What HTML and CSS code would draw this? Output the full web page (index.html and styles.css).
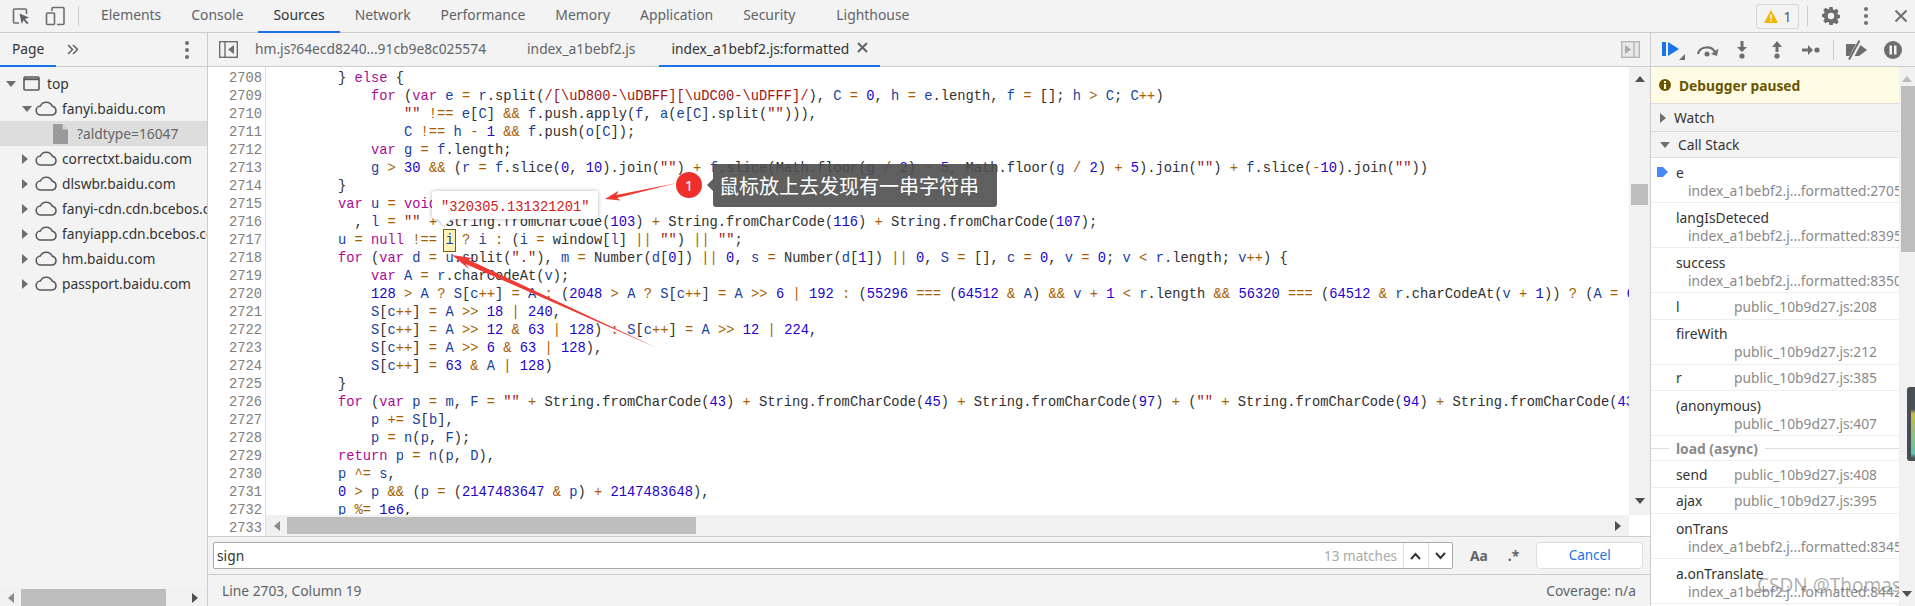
FILE: index.html
```html
<!DOCTYPE html>
<html lang="zh-CN">
<head>
  <meta charset="UTF-8">
  <title>DevTools - Sources</title>
  <link rel="stylesheet" href="styles.css">
</head>
<body>

  <!-- Barra principal -->
  <header class="topbar">
    <div class="top-tools">
      <svg class="tool-inspect" width="18" height="18" viewBox="0 0 18 18"><path d="M7 16H2.500a1 1 0 0 1-1-1V3a1 1 0 0 1 1-1h11a1 1 0 0 1 1 1v4" fill="none" stroke="#6e6e6e" stroke-width="1.600"/><path d="M7.500 6.500 17 10.500l-4 1.500 3.500 4-1.500 1.300-3.400-4-1.900 3.600z" fill="#5f6368"/></svg>
      <svg class="tool-device" width="20" height="20" viewBox="0 0 20 20"><path d="M7 5V2.500a1 1 0 0 1 1-1h10a1 1 0 0 1 1 1v15a1 1 0 0 1-1 1h-6" fill="none" stroke="#6e6e6e" stroke-width="1.600"/><rect x="1.500" y="7" width="8" height="11.500" rx="1" fill="none" stroke="#6e6e6e" stroke-width="1.600"/></svg>
      <span class="top-divider"></span>
    </div>
    <nav class="top-tabs">
      <span class="top-tab">Elements</span>
      <span class="top-tab">Console</span>
      <span class="top-tab top-tab-active">Sources</span>
      <span class="top-tab">Network</span>
      <span class="top-tab">Performance</span>
      <span class="top-tab">Memory</span>
      <span class="top-tab">Application</span>
      <span class="top-tab">Security</span>
      <span class="top-tab top-tab-last">Lighthouse</span>
    </nav>
    <div class="top-right">
      <span class="warn-badge">
        <svg width="14" height="13" viewBox="0 0 14 13"><path d="M7 0 14 13H0z" fill="#f4b400"/><path d="M6.200 4.500h1.600v4.500H6.200zM6.200 10h1.600v1.500H6.200z" fill="#fff"/></svg>
        <span>1</span>
      </span>
      <span class="top-divider"></span>
      <svg class="gear" width="18" height="18" viewBox="0 0 18 18"><path fill="#6e6e6e" fill-rule="evenodd" d="M7.400 0h3.200l.4 2.400 1.500.7 2-1.400 2.200 2.300-1.300 2 .6 1.500 2 .5v3l-2 .5-.6 1.500 1.300 2-2.200 2.200-2-1.300-1.500.6-.4 2.500H7.400L7 15.500l-1.500-.6-2 1.300-2.200-2.200 1.300-2-.6-1.500-2-.5V7l2-.5.6-1.500-1.300-2 2.200-2.300 2 1.400L7 2.400zM9 5.800a3.200 3.200 0 1 0 0 6.400 3.200 3.200 0 0 0 0-6.400z"/></svg>
      <span class="vdots"><i></i><i></i><i></i></span>
      <svg class="close-x" width="14" height="14" viewBox="0 0 14 14"><path d="M1.500 1.500l11 11M12.500 1.500l-11 11" stroke="#6e6e6e" stroke-width="2"/></svg>
    </div>
  </header>

  <main class="workspace">

    <!-- Panel de archivos -->
    <aside class="navigator">
      <div class="nav-head">
        <span class="nav-tab">Page</span>
        <span class="nav-more">
          <svg width="12" height="11" viewBox="0 0 12 11"><path d="M1 1l4.500 4.500L1 10M6 1l4.500 4.500L6 10" fill="none" stroke="#5f6368" stroke-width="1.500"/></svg>
        </span>
        <span class="vdots nav-dots"><i></i><i></i><i></i></span>
      </div>
      <div class="tree">
        <div class="tree-row">
          <span class="tri tri-down tree-tri-top"></span>
          <svg class="frame-icon" width="17" height="15" viewBox="0 0 17 15"><rect x="1" y="1" width="15" height="13" rx="1" fill="none" stroke="#5a5a5a" stroke-width="1.600"/><path d="M1 3.200h15" stroke="#5a5a5a" stroke-width="2"/></svg>
          <span class="tree-label">top</span>
        </div>
        <div class="tree-row tree-domain">
          <span class="tri tri-down"></span>
          <svg class="cloud" width="23" height="15" viewBox="0 0 23 15"><use href="#cloud-shape"/></svg>
          <span class="tree-label">fanyi.baidu.com</span>
        </div>
        <div class="tree-row tree-file">
          <svg class="file-icon" width="15" height="20" viewBox="0 0 15 20"><path d="M0 0h9.500L15 5.500V20H0z" fill="#9a9a9a"/><path d="M9.500 0v5.500H15z" fill="#d4d4d4"/></svg>
          <span class="tree-label">?aldtype=16047</span>
        </div>
        <div class="tree-row tree-domain">
          <span class="tri tri-right"></span>
          <svg class="cloud" width="23" height="15" viewBox="0 0 23 15"><use href="#cloud-shape"/></svg>
          <span class="tree-label">correctxt.baidu.com</span>
        </div>
        <div class="tree-row tree-domain">
          <span class="tri tri-right"></span>
          <svg class="cloud" width="23" height="15" viewBox="0 0 23 15"><use href="#cloud-shape"/></svg>
          <span class="tree-label">dlswbr.baidu.com</span>
        </div>
        <div class="tree-row tree-domain">
          <span class="tri tri-right"></span>
          <svg class="cloud" width="23" height="15" viewBox="0 0 23 15"><use href="#cloud-shape"/></svg>
          <span class="tree-label">fanyi-cdn.cdn.bcebos.com</span>
        </div>
        <div class="tree-row tree-domain">
          <span class="tri tri-right"></span>
          <svg class="cloud" width="23" height="15" viewBox="0 0 23 15"><use href="#cloud-shape"/></svg>
          <span class="tree-label">fanyiapp.cdn.bcebos.com</span>
        </div>
        <div class="tree-row tree-domain">
          <span class="tri tri-right"></span>
          <svg class="cloud" width="23" height="15" viewBox="0 0 23 15"><use href="#cloud-shape"/></svg>
          <span class="tree-label">hm.baidu.com</span>
        </div>
        <div class="tree-row tree-domain">
          <span class="tri tri-right"></span>
          <svg class="cloud" width="23" height="15" viewBox="0 0 23 15"><use href="#cloud-shape"/></svg>
          <span class="tree-label">passport.baidu.com</span>
        </div>
      </div>
      <div class="hbar nav-hbar">
        <span class="tri tri-left"></span>
        <span class="hbar-thumb nav-thumb"></span>
        <span class="tri tri-right tri-dark nav-next"></span>
      </div>
    </aside>

    <!-- Editor -->
    <section class="center">
      <div class="source-tabs">
        <svg class="pane-toggle" width="19" height="17" viewBox="0 0 19 17"><rect x="0.700" y="0.700" width="17.600" height="15.600" fill="none" stroke="#6e6e6e" stroke-width="1.400"/><path d="M6 1v15" stroke="#6e6e6e" stroke-width="1.400"/><path d="M15 4v9l-6-4.500z" fill="#6e6e6e"/></svg>
        <span class="source-tab source-tab-first">hm.js?64ecd8240...91cb9e8c025574</span>
        <span class="source-tab">index_a1bebf2.js</span>
        <span class="source-tab source-tab-active">index_a1bebf2.js:formatted
          <svg width="11" height="11" viewBox="0 0 11 11"><path d="M1 1l9 9M10 1l-9 9" stroke="#5f6368" stroke-width="2"/></svg>
        </span>
        <svg class="pane-toggle-right" width="19" height="17" viewBox="0 0 19 17"><rect x="0.700" y="0.700" width="17.600" height="15.600" fill="#e8e8e8" stroke="#b5b5b5" stroke-width="1.400"/><path d="M13 1v15" stroke="#b5b5b5" stroke-width="1.400"/><path d="M4 4v9l6-4.500z" fill="#a8a8a8"/></svg>
      </div>

      <div class="editor">
        <div class="gutter" id="gutter"></div>
        <div class="code-view"><div class="code-lines" id="code"></div></div>
        <div class="vbar">
          <span class="tri tri-up tri-dark"></span>
          <span class="vbar-thumb"></span>
          <span class="tri tri-down tri-dark vbar-next"></span>
        </div>
        <div class="hbar code-hbar">
          <span class="tri tri-left"></span>
          <span class="hbar-thumb code-thumb"></span>
          <span class="tri tri-right tri-dark code-next"></span>
        </div>
        <div class="corner"></div>
      </div>

      <div class="search-bar">
        <div class="search-box">
          <span class="search-text">sign</span>
          <span class="search-count">13 matches</span>
          <span class="search-step">
            <svg width="11" height="8" viewBox="0 0 11 8"><path d="M1 7l4.500-5L10 7" fill="none" stroke="#333" stroke-width="2"/></svg>
          </span>
          <span class="search-step">
            <svg width="11" height="8" viewBox="0 0 11 8"><path d="M1 1l4.500 5L10 1" fill="none" stroke="#333" stroke-width="2"/></svg>
          </span>
        </div>
        <span class="search-case">Aa</span>
        <span class="search-regex">.*</span>
        <span class="search-cancel">Cancel</span>
      </div>

      <footer class="status-bar">
        <span>Line 2703, Column 19</span>
        <span>Coverage: n/a</span>
      </footer>
    </section>

    <!-- Depurador -->
    <aside class="debugger">
      <div class="debug-tools">
        <svg class="dbg-resume" width="24" height="22" viewBox="0 0 24 22"><path d="M0 3h4v14H0zM6 3l11 7-11 7z" fill="#1a73e8"/><path d="M23 15v6h-6z" fill="#6e6e6e"/></svg>
        <svg class="dbg-over" width="23" height="14" viewBox="0 0 23 14"><path d="M2 11a9 8 0 0 1 17-2" fill="none" stroke="#6e6e6e" stroke-width="2.200"/><path d="M22.500 5.500 21 13l-6-2z" fill="#6e6e6e"/><circle cx="11" cy="11" r="2.500" fill="#6e6e6e"/></svg>
        <svg class="dbg-into" width="12" height="18" viewBox="0 0 12 18"><path d="M4.500 0h3v6H11l-5 5-5-5h3.500z" fill="#6e6e6e"/><circle cx="6" cy="15" r="2.600" fill="#6e6e6e"/></svg>
        <svg class="dbg-out" width="12" height="18" viewBox="0 0 12 18"><path d="M4.500 11h3V6H11L6 0 1 6h3.500z" fill="#6e6e6e"/><circle cx="6" cy="15" r="2.600" fill="#6e6e6e"/></svg>
        <svg class="dbg-step" width="18" height="12" viewBox="0 0 18 12"><path d="M0 4.500h6V1l5 5-5 5V7.500H0z" fill="#6e6e6e"/><circle cx="15" cy="6" r="2.600" fill="#6e6e6e"/></svg>
        <span class="top-divider dbg-divider"></span>
        <svg class="dbg-off" width="23" height="20" viewBox="0 0 23 20"><path d="M1 4h13l8 6-8 6H1z" fill="#6e6e6e"/><path d="M5.500 19 15 1" stroke="#f3f3f3" stroke-width="4.500"/><path d="M4 19.500 14.500 .5" stroke="#6e6e6e" stroke-width="2"/></svg>
        <svg class="dbg-pause" width="18" height="18" viewBox="0 0 18 18"><circle cx="9" cy="9" r="9" fill="#6e6e6e"/><path d="M5.500 4.500h2.500v9H5.500zM10 4.500h2.500v9H10z" fill="#f3f3f3"/></svg>
      </div>

      <div class="debug-body">
        <div class="debug-list">
          <div class="paused">
            <svg width="12" height="12" viewBox="0 0 12 12"><circle cx="6" cy="6" r="6" fill="#6a5600"/><path d="M5 5h2v5H5zM5 2h2v2H5z" fill="#fffce6"/></svg>
            <span>Debugger paused</span>
          </div>
          <div class="section section-watch"><span class="tri tri-right"></span>Watch</div>
          <div class="section section-stack"><span class="tri tri-down"></span>Call Stack</div>

          <div class="frame frame-current">
            <svg class="frame-arrow" width="11" height="10" viewBox="0 0 11 10"><path d="M0 0h6l5 5-5 5H0z" fill="#4a8af4"/></svg>
            <span class="frame-name">e</span>
            <span class="frame-loc frame-long">index_a1bebf2.j...formatted:2705</span>
          </div>
          <div class="frame">
            <span class="frame-name">langIsDeteced</span>
            <span class="frame-loc frame-long">index_a1bebf2.j...formatted:8395</span>
          </div>
          <div class="frame">
            <span class="frame-name">success</span>
            <span class="frame-loc frame-long">index_a1bebf2.j...formatted:8350</span>
          </div>
          <div class="frame frame-single">
            <span class="frame-name">l</span>
            <span class="frame-loc">public_10b9d27.js:208</span>
          </div>
          <div class="frame">
            <span class="frame-name frame-full">fireWith</span>
            <span class="frame-loc">public_10b9d27.js:212</span>
          </div>
          <div class="frame frame-single">
            <span class="frame-name">r</span>
            <span class="frame-loc">public_10b9d27.js:385</span>
          </div>
          <div class="frame">
            <span class="frame-name frame-full">(anonymous)</span>
            <span class="frame-loc">public_10b9d27.js:407</span>
          </div>
          <div class="async-row"><span>load (async)</span></div>
          <div class="frame frame-single">
            <span class="frame-name">send</span>
            <span class="frame-loc">public_10b9d27.js:408</span>
          </div>
          <div class="frame frame-single">
            <span class="frame-name">ajax</span>
            <span class="frame-loc">public_10b9d27.js:395</span>
          </div>
          <div class="frame">
            <span class="frame-name">onTrans</span>
            <span class="frame-loc frame-long">index_a1bebf2.j...formatted:8345</span>
          </div>
          <div class="frame">
            <span class="frame-name">a.onTranslate</span>
            <span class="frame-loc frame-long">index_a1bebf2.j...formatted:8442</span>
          </div>
        </div>
        <div class="debug-vbar">
          <span class="tri tri-up"></span>
          <span class="debug-thumb"></span>
          <span class="tri tri-down tri-dark debug-next"></span>
        </div>
      </div>
    </aside>
  </main>

  <!-- Anotaciones sobre la captura -->
  <div class="value-tip">"320305.131321201"</div>
  <svg class="arrows" width="1915" height="606" viewBox="0 0 1915 606">
    <polygon points="605,199 620.700,200.600 617,197.900 677,183 616.400,194.900 618.500,190.800"/>
    <polygon points="452,255 474.500,258.600 467.600,259.300 657,348 465.600,263.900 469.500,269.600"/>
  </svg>
  <div class="step-num">1</div>
  <div class="callout">鼠标放上去发现有一串字符串</div>
  <div class="watermark">CSDN @Thomas</div>
  <div class="side-widget"></div>

  <svg class="defs" width="0" height="0">
    <symbol id="cloud-shape" viewBox="0 0 23 15">
      <path d="M6 14a4.500 4.500 0 0 1-.6-9A6.500 6.500 0 0 1 17.300 5.200 4.500 4.500 0 0 1 17.500 14z" fill="none" stroke="#5a5a5a" stroke-width="1.600"/>
    </symbol>
  </svg>

  <script src="script.js"></script>
</body>
</html>
```

FILE: styles.css
```css
* {
  box-sizing: border-box;
}

body {
  margin: 0;
  height: 606px;
  overflow: hidden;
  position: relative;
  display: flex;
  flex-direction: column;
  font-family: "Noto Sans", sans-serif;
  font-size: 13.8px;
  color: #333;
  background-color: #f3f3f3;
}

/* Barra principal */
.topbar {
  height: 33px;
  flex: none;
  display: flex;
  align-items: center;
  border-bottom: 1px solid #ccc;
}

.top-tools {
  width: 86px;
  flex: none;
  display: flex;
  align-items: center;
  padding-left: 12px;
}

.tool-device {
  margin-left: 15px;
}

.top-divider {
  width: 1px;
  height: 20px;
  background-color: #ccc;
  margin-left: 13px;
}

.top-tabs {
  display: flex;
  height: 100%;
  flex: 1;
}

.top-tab {
  padding: 0 15px;
  font-size: 13.9px;
  line-height: 30px;
  color: #5f6368;
  border-bottom: 2px solid transparent;
  height: 33px;
}

.top-tab-active {
  color: #333;
  border-bottom-color: #1a73e8;
}

.top-tab-last {
  margin-left: 11px;
}

.top-right {
  display: flex;
  align-items: center;
  padding-right: 7px;
}

.warn-badge {
  width: 43px;
  height: 25px;
  display: flex;
  align-items: center;
  justify-content: center;
  gap: 6px;
  border: 1px solid #d6d6d6;
  border-radius: 3px;
  color: #555;
}

.top-right .top-divider {
  margin: 0 14px 0 8px;
}

.vdots {
  display: inline-flex;
  flex-direction: column;
  gap: 3px;
}

.vdots i {
  width: 4px;
  height: 4px;
  border-radius: 50%;
  background-color: #6e6e6e;
}

.top-right .vdots {
  margin: 0 26px 0 24px;
}

/* Flex principal */
.workspace {
  flex: 1;
  min-height: 0;
  display: flex;
}

.navigator {
  width: 208px;
  flex: none;
  display: flex;
  flex-direction: column;
  border-right: 1px solid #ccc;
}

.nav-head {
  height: 34px;
  flex: none;
  display: flex;
  align-items: center;
  border-bottom: 1px solid #ccc;
  position: relative;
}

.nav-tab {
  width: 56px;
  height: 34px;
  padding-left: 12px;
  line-height: 32px;
  border-bottom: 2px solid #1a73e8;
}

.nav-more {
  margin-left: 11px;
  display: flex;
}

.nav-dots {
  margin-left: 106px;
}

.tree {
  flex: 1;
  padding-top: 4px;
  overflow: hidden;
  white-space: nowrap;
}

.tree-row {
  height: 25px;
  display: flex;
  align-items: center;
  padding-left: 6px;
}

.tree-tri-top {
  margin-right: 7px;
}

.tree-row .frame-icon {
  margin-right: 7px;
  flex: none;
}

.tree-domain {
  padding-left: 22px;
}

.tree-domain .tri {
  margin-right: 3px;
}

.tree-domain .tri-right {
  margin-right: 7px;
}

.tree-domain .cloud {
  flex: none;
  margin-right: 4px;
}

.tree-file {
  padding-left: 53px;
  background-color: #ddd;
  color: #666;
}

.tree-file .file-icon {
  flex: none;
  margin-right: 9px;
}

.tree-label {
  flex: none;
}

/* Triangulos */
.tri {
  display: inline-block;
  width: 0;
  height: 0;
  flex: none;
  border-style: solid;
  border-color: transparent;
}

.tri-down {
  border-width: 6px 5px 0;
  border-top-color: #6e6e6e;
}

.tri-up {
  border-width: 0 5px 6px;
  border-bottom-color: #bbb;
}

.tri-right {
  border-width: 5px 0 5px 6px;
  border-left-color: #6e6e6e;
}

.tri-left {
  border-width: 5px 6px 5px 0;
  border-right-color: #8a8a8a;
}

.tri-up.tri-dark {
  border-bottom-color: #505050;
}

.tri-down.tri-dark {
  border-top-color: #505050;
}

.tri-right.tri-dark {
  border-left-color: #505050;
}

/* Scrollbars */
.hbar {
  display: flex;
  align-items: center;
  background-color: #f1f1f1;
}

.hbar-thumb {
  height: 17px;
  background-color: #bdbdbd;
}

.nav-hbar {
  height: 17px;
  flex: none;
  padding-left: 8px;
}

.nav-hbar .hbar-thumb {
  width: 145px;
  margin-left: 7px;
}

.nav-next {
  margin-left: 26px;
}

.vbar {
  grid-column: 3;
  grid-row: 1;
  display: flex;
  flex-direction: column;
  align-items: center;
  background-color: #f1f1f1;
  padding-top: 9px;
}

.vbar-thumb {
  width: 17px;
  height: 21px;
  margin-top: 102px;
  background-color: #bdbdbd;
}

.vbar-next {
  margin-top: 293px;
}

.code-hbar {
  grid-column: 2;
  grid-row: 2;
  padding-left: 8px;
}

.code-thumb {
  width: 409px;
  margin-left: 7px;
}

.code-next {
  margin-left: 919px;
}

.corner {
  grid-column: 3;
  grid-row: 2;
  background-color: #fff;
}

/* Editor */
.center {
  flex: 1;
  min-width: 0;
  display: flex;
  flex-direction: column;
}

.source-tabs {
  height: 34px;
  flex: none;
  display: flex;
  align-items: center;
  border-bottom: 1px solid #ccc;
  padding-left: 11px;
  color: #5f6368;
}

.pane-toggle {
  flex: none;
  margin-right: 5px;
}

.pane-toggle-right {
  flex: none;
  margin-left: auto;
  margin-right: 10px;
}

.source-tab {
  height: 34px;
  padding: 0 12px;
  line-height: 32px;
  white-space: nowrap;
  border-bottom: 2px solid transparent;
}

.source-tab-first {
  padding-right: 17px;
}

.source-tab + .source-tab {
  margin-left: 12px;
}

.source-tab-active {
  color: #333;
  border-bottom-color: #1a73e8;
}

.source-tab-active svg {
  margin-left: 4px;
  vertical-align: 1px;
}

.editor {
  flex: 1;
  min-height: 0;
  display: grid;
  grid-template-columns: 58px minmax(0, 1fr) 21px;
  grid-template-rows: minmax(0, 1fr) 21px;
  background-color: #fff;
  border-bottom: 1px solid #ccc;
}

.gutter {
  grid-column: 1;
  grid-row: 1 / 3;
  overflow: hidden;
  padding-top: 3px;
  padding-right: 3px;
  text-align: right;
  border-right: 1px solid #ddd;
  color: #808080;
  font-family: "Liberation Mono", monospace;
  font-size: 13.75px;
  line-height: 18px;
  background-color: #fff;
}

.code-view {
  grid-column: 2;
  grid-row: 1;
  overflow: hidden;
  padding-left: 6px;
}

.code-lines {
  margin-top: -15px;
  font-family: "Liberation Mono", monospace;
  font-size: 13.75px;
  line-height: 18px;
  white-space: pre;
  color: #303030;
}

.code-line {
  height: 18px;
}

/* Colores de sintaxis */
.k {
  color: #aa0d91;
}

.n {
  color: #1c00cf;
}

.s {
  color: #a31515;
}

.v {
  color: #1a3f9f;
}

.o {
  color: #a85d00;
}

.hit {
  background-color: #fff2b8;
  outline: 1px solid #7a5c12;
  padding: 3px 1px;
  margin: 0 -1px;
}

/* Barra de busqueda */
.search-bar {
  height: 38px;
  flex: none;
  display: flex;
  align-items: center;
  padding-left: 5px;
  border-bottom: 1px solid #ccc;
}

.search-box {
  width: 1240px;
  height: 27px;
  display: flex;
  align-items: center;
  background-color: #fff;
  border: 1px solid #aaa;
  border-radius: 2px;
  padding-left: 3px;
}

.search-text {
  flex: 1;
}

.search-count {
  color: #aaa;
  font-size: 13.5px;
  margin-right: 6px;
}

.search-step {
  width: 24.500px;
  height: 100%;
  display: flex;
  align-items: center;
  justify-content: center;
  border-left: 1px solid #ddd;
}

.search-case {
  margin-left: 17px;
  color: #5f6368;
  font-weight: 700;
}

.search-regex {
  margin-left: 20px;
  color: #5f6368;
  font-weight: 700;
}

.search-cancel {
  width: 107px;
  height: 27px;
  margin-left: 17px;
  line-height: 25px;
  text-align: center;
  color: #1a73e8;
  font-size: 13.500px;
  background-color: #fff;
  border: 1px solid #ddd;
  border-radius: 4px;
}

.status-bar {
  height: 31px;
  flex: none;
  display: flex;
  align-items: center;
  justify-content: space-between;
  padding: 0 14px;
  color: #5f6368;
}

/* Depurador */
.debugger {
  width: 265px;
  flex: none;
  display: flex;
  flex-direction: column;
  border-left: 1px solid #ccc;
}

.debug-tools {
  height: 34px;
  flex: none;
  display: flex;
  align-items: center;
  border-bottom: 1px solid #ccc;
  padding-left: 11px;
}

.dbg-over {
  margin-left: 10px;
}

.dbg-into {
  margin-left: 17px;
}

.dbg-out {
  margin-left: 23px;
}

.dbg-step {
  margin-left: 19px;
}

.dbg-divider {
  margin-left: 13px;
}

.dbg-off {
  margin-left: 11px;
}

.dbg-pause {
  margin-left: 16px;
}

.debug-body {
  flex: 1;
  min-height: 0;
  display: flex;
}

.debug-list {
  flex: 1;
  min-width: 0;
  overflow: hidden;
  background-color: #fff;
}

.paused {
  height: 37px;
  display: flex;
  align-items: center;
  gap: 8px;
  padding-left: 8px;
  background-color: #fffce6;
  border-bottom: 1px solid #ddd;
  color: #6a5600;
  font-weight: 700;
}

.section {
  display: flex;
  align-items: center;
  gap: 8px;
  padding-left: 9px;
  background-color: #f3f3f3;
  border-bottom: 1px solid #ddd;
}

.section-watch {
  height: 28px;
}

.section-stack {
  height: 26px;
}

.frame {
  display: flex;
  flex-wrap: wrap;
  position: relative;
  padding: 5.5px 0 2.5px 25px;
  line-height: 18px;
  border-bottom: 1px solid #eee;
  white-space: nowrap;
  overflow: hidden;
}

.frame-single {
  padding-top: 4.5px;
  padding-bottom: 3px;
}

.frame-arrow {
  position: absolute;
  left: 6px;
  top: 9px;
}

.frame-full {
  width: 100%;
}

.frame-name {
  color: #333;
}

.frame-loc {
  margin-left: auto;
  margin-right: 22px;
  color: #8a8a8a;
}

.frame-long {
  width: 100%;
  margin: 0;
  padding-left: 12px;
}

.async-row {
  height: 25px;
  display: flex;
  align-items: center;
  gap: 7px;
  border-bottom: 1px solid #eee;
  padding-left: 25px;
  color: #8a8a8a;
  font-weight: 700;
  position: relative;
}

.async-row::before,
.async-row::after {
  content: "";
  height: 1px;
  background-color: #ddd;
}

.async-row::before {
  position: absolute;
  left: 0;
  width: 18px;
}

.async-row::after {
  flex: 1;
}

.debug-vbar {
  width: 16px;
  flex: none;
  display: flex;
  flex-direction: column;
  align-items: center;
  background-color: #f1f1f1;
  padding-top: 9px;
}

.debug-thumb {
  width: 14px;
  height: 166px;
  margin: 4px 0 0 2px;
  background-color: #bdbdbd;
}

.debug-next {
  margin-top: 339px;
}

/* Anotaciones */
.value-tip {
  position: absolute;
  left: 432px;
  top: 191px;
  width: 166px;
  height: 28px;
  padding-left: 9px;
  font-family: "Liberation Mono", monospace;
  font-size: 13.750px;
  line-height: 33px;
  color: #d02020;
  background-color: #fff;
  border-radius: 2px;
  box-shadow: 0 0 4px rgba(0, 0, 0, 0.3);
}

.value-tip::after {
  content: "";
  position: absolute;
  left: 7px;
  top: 22px;
  width: 11px;
  height: 11px;
  background-color: #fff;
  transform: rotate(45deg);
  box-shadow: 1px 1px 1px rgba(0, 0, 0, 0.15);
}

.arrows {
  position: absolute;
  left: 0;
  top: 0;
  pointer-events: none;
}

.arrows polygon {
  fill: #ef3b36;
}

.step-num {
  position: absolute;
  left: 676px;
  top: 172px;
  width: 26px;
  height: 26px;
  border-radius: 50%;
  background-color: #ee2f2b;
  color: #fff;
  font-size: 15px;
  line-height: 26px;
  text-align: center;
}

.callout {
  position: absolute;
  left: 713px;
  top: 164px;
  width: 284px;
  height: 43px;
  padding-left: 6px;
  border-radius: 3px;
  background-color: rgba(78, 78, 78, 0.9);
  color: #fff;
  font-family: "Noto Sans CJK SC", sans-serif;
  font-size: 20px;
  line-height: 43px;
  white-space: nowrap;
}

.callout::before {
  content: "";
  position: absolute;
  left: -6px;
  top: 15px;
  border-style: solid;
  border-width: 6px 6px 6px 0;
  border-color: transparent rgba(78, 78, 78, 0.9) transparent transparent;
}

.watermark {
  position: absolute;
  left: 1757px;
  top: 571px;
  width: 142px;
  overflow: hidden;
  font-size: 19px;
  line-height: 28px;
  color: rgba(110, 110, 110, 0.55);
  white-space: nowrap;
}

.side-widget {
  position: absolute;
  left: 1907px;
  top: 387px;
  width: 8px;
  height: 74px;
  border-radius: 3px 0 0 3px;
  background: linear-gradient(#4a5057 30%, #c9b94a 36%, #58c8b0 90%, #4a5057 96%);
  border-left: 4px solid #474d55;
}

.defs {
  position: absolute;
}
```

FILE: script.js
```js
// Lineas del fichero formateado, la primera queda medio oculta bajo las pestañas
const firstLine = 2707;
const lines = [
  '            t > 30 && (r = "" + r.substr(0, 10) + r.substr(Math.floor(t / 2) - 5, 10) + r.substr(-10, 10))',
  '        } else {',
  '            for (var e = r.split(/[\\uD800-\\uDBFF][\\uDC00-\\uDFFF]/), C = 0, h = e.length, f = []; h > C; C++)',
  '                "" !== e[C] && f.push.apply(f, a(e[C].split(""))),',
  '                C !== h - 1 && f.push(o[C]);',
  '            var g = f.length;',
  '            g > 30 && (r = f.slice(0, 10).join("") + f.slice(Math.floor(g / 2) - 5, Math.floor(g / 2) + 5).join("") + f.slice(-10).join(""))',
  '        }',
  '        var u = void 0',
  '          , l = "" + String.fromCharCode(103) + String.fromCharCode(116) + String.fromCharCode(107);',
  '        u = null !== ⟦i⟧ ? i : (i = window[l] || "") || "";',
  '        for (var d = u.split("."), m = Number(d[0]) || 0, s = Number(d[1]) || 0, S = [], c = 0, v = 0; v < r.length; v++) {',
  '            var A = r.charCodeAt(v);',
  '            128 > A ? S[c++] = A : (2048 > A ? S[c++] = A >> 6 | 192 : (55296 === (64512 & A) && v + 1 < r.length && 56320 === (64512 & r.charCodeAt(v + 1)) ? (A = 65536 + ((1023 & A) << 10) + (1023 & r.charCodeAt(++v)),',
  '            S[c++] = A >> 18 | 240,',
  '            S[c++] = A >> 12 & 63 | 128) : S[c++] = A >> 12 | 224,',
  '            S[c++] = A >> 6 & 63 | 128),',
  '            S[c++] = 63 & A | 128)',
  '        }',
  '        for (var p = m, F = "" + String.fromCharCode(43) + String.fromCharCode(45) + String.fromCharCode(97) + ("" + String.fromCharCode(94) + String.fromCharCode(43) + String.fromCharCode(54)), D = 0; D < b; b++)',
  '            p += S[b],',
  '            p = n(p, F);',
  '        return p = n(p, D),',
  '        p ^= s,',
  '        0 > p && (p = (2147483647 & p) + 2147483648),',
  '        p %= 1e6,',
  '        p.toString() + "." + (p ^ u)'
];

const tokens = /⟦(.)⟧|("[^"]*"|\/\[.*?\]\/)|\b(var|for|else|void|null|return)\b|\b(\d+(?:e\d+)?)\b|(\.?[A-Za-z_]\w*)|([=!<>&|+\-*%^?:\/]+)/g;

function highlight(text) {
  return text.replace(tokens, (all, hit, str, key, num, name, op) => {
    if (hit) return `<span class="hit v">${hit}</span>`;
    if (str) return `<span class="s">${str}</span>`;
    if (key) return `<span class="k">${key}</span>`;
    if (num) return `<span class="n">${num}</span>`;
    if (op) return `<span class="o">${op.replace(/&/g, "&amp;").replace(/</g, "&lt;")}</span>`;
    // propiedades y globales en oscuro, variables en azul
    if (name[0] === "." || name.length > 2) return name;
    return `<span class="v">${name}</span>`;
  });
}

document.getElementById("code").innerHTML = lines
  .map(line => `<div class="code-line">${highlight(line)}</div>`)
  .join("");

let numbers = "";
for (let i = 1; i <= 26; i++) {
  numbers += `<div>${firstLine + i}</div>`;
}
document.getElementById("gutter").innerHTML = numbers;
```
